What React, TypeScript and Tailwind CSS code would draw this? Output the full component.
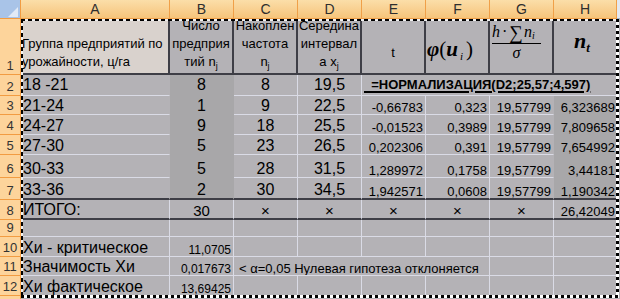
import React from "react";

const G = "bg-[#b4b2b6]";
const GD = "bg-[#a8a7a9]";
const BEIGE = "bg-[#d9d2cd]";

type L = "l" | "d" | "n" | "x";

function Cell({
  w,
  r = "l",
  b = "l",
  bg = G,
  cls = "",
  children,
}: {
  w: string;
  r?: L;
  b?: L;
  bg?: string;
  cls?: string;
  children?: React.ReactNode;
}) {
  const rc =
    r === "d"
      ? "border-r-2 border-r-[#3e3e46]"
      : r === "n"
      ? "border-r border-r-transparent"
      : r === "x"
      ? ""
      : "border-r border-r-[#dadbe6]";
  const bc =
    b === "d"
      ? "border-b-2 border-b-[#3e3e46]"
      : b === "n"
      ? "border-b border-b-transparent"
      : b === "x"
      ? ""
      : "border-b border-b-[#dadbe6]";
  return (
    <div
      className={`${w} ${bg} ${rc} ${bc} shrink-0 flex overflow-hidden whitespace-nowrap leading-none ${cls}`}
    >
      {children}
    </div>
  );
}

function RowHead({ n }: { n: number }) {
  return (
    <div className="w-[21px] shrink-0 bg-[#fdd49b] border-r border-b border-[#f29c42] flex items-end justify-center pb-[2px] text-[13px] leading-none text-[#333333]">
      {n}
    </div>
  );
}

const BL = "items-end justify-start pl-[2px]";
const BC = "items-end justify-center";
const BR = "items-end justify-end pr-[2px]";

const W_A = "w-[149px]";
const W = "w-[64px]";
const W_H = "w-[62px]";

type DataRow = {
  h: string;
  n: number;
  a: string;
  b: string;
  c: string;
  d: string;
  e: string;
  f: string;
  g: string;
  hh: string;
  last?: boolean;
};

const dataRows: DataRow[] = [
  { h: "h-[19px]", n: 3, a: "21-24", b: "1", c: "9", d: "22,5", e: "-0,66783", f: "0,323", g: "19,57799", hh: "6,323689" },
  { h: "h-[20px]", n: 4, a: "24-27", b: "9", c: "18", d: "25,5", e: "-0,01523", f: "0,3989", g: "19,57799", hh: "7,809658" },
  { h: "h-[20px]", n: 5, a: "27-30", b: "5", c: "23", d: "26,5", e: "0,202306", f: "0,391", g: "19,57799", hh: "7,654992" },
  { h: "h-[23px]", n: 6, a: "30-33", b: "5", c: "28", d: "31,5", e: "1,289972", f: "0,1758", g: "19,57799", hh: "3,44181" },
  { h: "h-[22px]", n: 7, a: "33-36", b: "2", c: "30", d: "34,5", e: "1,942571", f: "0,0608", g: "19,57799", hh: "1,190342", last: true },
];

function Ants() {
  return (
    <div className="absolute left-[21px] top-[19px] w-[598px] h-[279px] pointer-events-none">
      <div className="absolute left-0 right-0 top-0 h-[2px] bg-[image:repeating-linear-gradient(90deg,#000_0px,#000_4px,#f2f2f2_4px,#f2f2f2_7px)]" />
      <div className="absolute left-0 top-0 bottom-0 w-[2px] bg-[image:repeating-linear-gradient(180deg,#000_0px,#000_4px,#f2f2f2_4px,#f2f2f2_7px)]" />
      <div className="absolute right-0 top-0 bottom-0 w-[3px] bg-[image:repeating-linear-gradient(180deg,#000_0px,#000_3px,#ffffff_3px,#ffffff_6px)]" />
      <div className="absolute left-0 right-0 bottom-0 h-[3px] bg-[image:repeating-linear-gradient(90deg,#000_0px,#000_3px,#ffffff_3px,#ffffff_6px)]" />
    </div>
  );
}

export default function App() {
  const colHeads: [string, string][] = [
    ["A", "w-[149px]"],
    ["B", "w-[64px]"],
    ["C", "w-[64px]"],
    ["D", "w-[64px]"],
    ["E", "w-[64px]"],
    ["F", "w-[64px]"],
    ["G", "w-[64px]"],
    ["H", "w-[63px]"],
  ];

  return (
    <div className="relative w-[620px] h-[299px] overflow-hidden bg-[#b4b2b6] text-black font-['Liberation_Sans',Arial,sans-serif]">
      {/* column headers */}
      <div className="flex h-[19px]">
        <div className="w-[21px] shrink-0 bg-[#a9c4e8] border-r border-b border-[#f29c42] flex items-end justify-end pr-[2px] pb-[1px]">
          <svg width="10" height="10" viewBox="0 0 10 10">
            <polygon points="10,0 10,10 0,10" fill="#e2eaf6" />
          </svg>
        </div>
        {colHeads.map(([l, w]) => (
          <div
            key={l}
            className={`${w} shrink-0 bg-linear-to-b from-[#fbdea9] to-[#f6c47a] border-r border-b border-[#f0a048] flex items-center justify-center text-[14px] leading-none text-[#2e2e2e]`}
          >
            {l}
          </div>
        ))}
        <div className="w-[3px] shrink-0 bg-[#e3e8f0] border-b border-[#9eb6ce]" />
      </div>

      {/* row 1 */}
      <div className="flex h-[56px]">
        <RowHead n={1} />
        <Cell w={W_A} r="d" b="d" bg={BEIGE} cls="items-end justify-start pl-[1px] pb-[2px]">
          <div className="flex flex-col text-[13px] leading-[18px]">
            <span>Группа предприятий по</span>
            <span>урожайности, ц/га</span>
          </div>
        </Cell>
        <Cell w={W} r="d" b="d" cls="items-end justify-center pb-[1px]">
          <div className="flex flex-col items-center text-[13px] leading-[18px]">
            <span>Число</span>
            <span>предприя</span>
            <span>
              тий n<span className="text-[9px] relative top-[3px]">j</span>
            </span>
          </div>
        </Cell>
        <Cell w={W} r="d" b="d" cls="items-end justify-center pb-[1px]">
          <div className="flex flex-col items-center text-[13px] leading-[18px]">
            <span>Накоплен</span>
            <span>частота</span>
            <span>
              n<span className="text-[9px] relative top-[3px]">j</span>
            </span>
          </div>
        </Cell>
        <Cell w={W} r="d" b="d" cls="items-end justify-center pb-[1px]">
          <div className="flex flex-col items-center text-[13px] leading-[18px]">
            <span>Середина</span>
            <span>интервал</span>
            <span>
              а x<span className="text-[9px] relative top-[3px]">j</span>
            </span>
          </div>
        </Cell>
        <Cell w={W} r="d" b="d" cls="items-end justify-center pb-[14px] text-[13px]">
          t
        </Cell>
        <Cell w={W} r="d" b="d" cls="items-end justify-start pl-[1px] pb-[13px]">
          <span className="font-['Liberation_Serif','Times_New_Roman',serif] text-[21px] leading-none flex items-baseline">
            <span className="italic font-bold">φ</span>
            <span>(</span>
            <span className="italic font-bold">u</span>
            <span className="italic text-[11px] relative top-[4px] ml-[2px]">i</span>
            <span className="ml-[3px]">)</span>
          </span>
        </Cell>
        <Cell w={W} r="d" b="d" cls="items-start justify-start pl-[2px] pt-[2px]">
          <div className="flex flex-col items-start w-[49px] font-['Liberation_Serif','Times_New_Roman',serif] leading-none">
            <div className="flex items-baseline h-[16px] text-[16px]">
              <span className="italic">h</span>
              <span className="mx-[2px]">·</span>
              <span className="text-[19px] relative top-[2px]">∑</span>
              <span className="italic ml-[1px]">n</span>
              <span className="italic text-[10px] relative top-[2px]">i</span>
            </div>
            <div className="w-full h-px bg-black mt-[6px]" />
            <div className="italic text-[16px] mt-[1px] self-center">σ</div>
          </div>
        </Cell>
        <Cell w={W_H} r="x" b="d" cls="items-end justify-start pl-[20px] pb-[21px]">
          <span className="font-['Liberation_Serif','Times_New_Roman',serif] italic font-bold text-[22px] leading-none flex items-baseline">
            n<span className="text-[13px] relative top-[4px]">t</span>
          </span>
        </Cell>
      </div>

      {/* row 2 */}
      <div className="flex h-[21px]">
        <RowHead n={2} />
        <Cell w={W_A} r="n" cls={`${BL} pb-[2px] text-[16px]`}>18 -21</Cell>
        <Cell w={W} r="n" b="n" bg={GD} cls={`${BC} pb-[2px] text-[16px]`}>8</Cell>
        <Cell w={W} cls={`${BC} pb-[2px] text-[16px]`}>8</Cell>
        <Cell w={W} cls={`${BC} pb-[2px] text-[16px]`}>19,5</Cell>
        <Cell w="w-[254px]" r="x" cls="items-end justify-start pl-[2px] pb-[4px] text-[13px]">
          <span className="font-bold underline decoration-2 underline-offset-[2px] whitespace-pre">
            {"  =НОРМАЛИЗАЦИЯ(D2;25,57;4,597)"}
          </span>
        </Cell>
      </div>

      {/* rows 3-7 */}
      {dataRows.map((r) => {
        const b: L = r.last ? "d" : "l";
        const bd: L = r.last ? "d" : "n";
        return (
          <div key={r.n} className={`flex ${r.h}`}>
            <RowHead n={r.n} />
            <Cell w={W_A} r="n" b={b} cls={`${BL} text-[16px]`}>{r.a}</Cell>
            <Cell w={W} r="n" b={bd} bg={GD} cls={`${BC} text-[16px]`}>{r.b}</Cell>
            <Cell w={W} b={b} cls={`${BC} text-[16px]`}>{r.c}</Cell>
            <Cell w={W} b={b} cls={`${BC} text-[16px]`}>{r.d}</Cell>
            <Cell w={W} b={b} cls={`${BR} text-[13px]`}>{r.e}</Cell>
            <Cell w={W} b={b} cls={`${BR} text-[13px]`}>{r.f}</Cell>
            <Cell w={W} r="n" b={b} cls={`${BR} text-[13px]`}>{r.g}</Cell>
            <Cell w={W_H} r="x" b={bd} bg={GD} cls="items-end justify-end pr-[1px] text-[13px]">{r.hh}</Cell>
          </div>
        );
      })}

      {/* row 8 */}
      <div className="flex h-[20px]">
        <RowHead n={8} />
        <Cell w={W_A} b="d" cls={`${BL} text-[16px]`}>ИТОГО:</Cell>
        <Cell w={W} b="d" cls={`${BC} text-[15px]`}>30</Cell>
        <Cell w={W} b="d" cls={`${BC} text-[15px]`}>×</Cell>
        <Cell w={W} b="d" cls={`${BC} text-[15px]`}>×</Cell>
        <Cell w={W} b="d" cls={`${BC} text-[15px]`}>×</Cell>
        <Cell w={W} b="d" cls={`${BC} text-[15px]`}>×</Cell>
        <Cell w={W} b="d" cls={`${BC} text-[15px]`}>×</Cell>
        <Cell w={W_H} r="x" b="d" cls="items-end justify-end pr-[1px] text-[13px]">26,42049</Cell>
      </div>

      {/* row 9 */}
      <div className="flex h-[17px]">
        <RowHead n={9} />
        <Cell w={W_A} />
        <Cell w={W} />
        <Cell w={W} />
        <Cell w={W} />
        <Cell w={W} />
        <Cell w={W} />
        <Cell w={W} />
        <Cell w={W_H} r="x" />
      </div>

      {/* row 10 */}
      <div className="flex h-[20px]">
        <RowHead n={10} />
        <Cell w={W_A} cls={`${BL} text-[16px]`}>Хи - критическое</Cell>
        <Cell w={W} cls={`${BR} text-[12px]`}>11,0705</Cell>
        <Cell w={W} />
        <Cell w={W} />
        <Cell w={W} />
        <Cell w={W} />
        <Cell w={W} />
        <Cell w={W_H} r="x" />
      </div>

      {/* row 11 */}
      <div className="flex h-[19px]">
        <RowHead n={11} />
        <Cell w={W_A} cls={`${BL} text-[16px]`}>Значимость Хи</Cell>
        <Cell w={W} cls={`${BR} text-[12px]`}>0,017673</Cell>
        <Cell w="w-[256px]" cls="items-end justify-start pl-[5px] text-[13px]">
          {"< α=0,05 Нулевая гипотеза отклоняется"}
        </Cell>
        <Cell w={W} />
        <Cell w={W_H} r="x" />
      </div>

      {/* row 12 */}
      <div className="flex h-[20px]">
        <RowHead n={12} />
        <Cell w={W_A} cls={`${BL} text-[16px]`}>Хи фактическое</Cell>
        <Cell w={W} cls={`${BR} text-[12px]`}>13,69425</Cell>
        <Cell w={W} />
        <Cell w={W} />
        <Cell w={W} />
        <Cell w={W} />
        <Cell w={W} />
        <Cell w={W_H} r="x" />
      </div>

      {/* filler */}
      <div className="flex h-[3px]">
        <div className="w-[21px] shrink-0 bg-[#fdd49b] border-r border-[#f29c42]" />
      </div>

      <Ants />
    </div>
  );
}
